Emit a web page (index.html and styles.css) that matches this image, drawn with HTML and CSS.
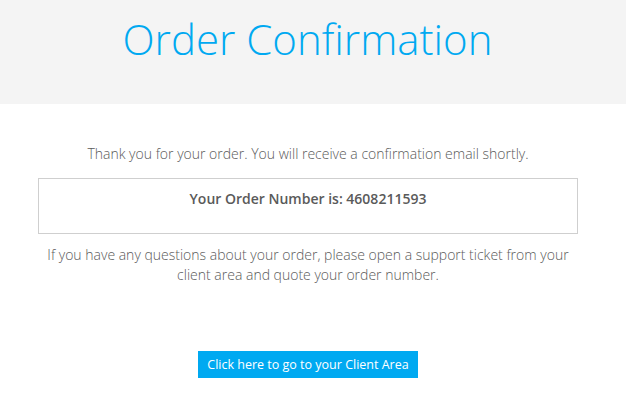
FILE: index.html
```html
<!DOCTYPE html>
<html>
<head>
<meta charset="utf-8">
<link rel="stylesheet" href="styles.css">
</head>
<body>
<header class="hero">
  <div class="hero-inner">
    <h1 class="title">Order Confirmation</h1>
  </div>
</header>
<main class="content">
  <p class="lead">Thank you for your order. You will receive a confirmation email shortly.</p>
  <div class="order-box">Your Order Number is: 4608211593</div>
  <p class="note">If you have any questions about your order, please open a support ticket from your client area and quote your order number.</p>
  <div class="actions">
    <a class="btn" href="#">Click here to go to your Client Area</a>
  </div>
</main>
</body>
</html>
```
FILE: styles.css
```css
html, body {
  margin: 0;
  padding: 0;
  background: #fff;
}
body {
  font-family: "Open Sans", "Liberation Sans", sans-serif;
  color: #5a5a5a;
}
.hero {
  background: #f4f4f4;
  height: 104px;
}
.hero-inner {
  width: 615px;
  display: flex;
  justify-content: center;
}
.title {
  margin: 9px 0 0;
  font-size: 42px;
  font-weight: 300;
  color: #00a9f1;
  line-height: 60px;
}
.content {
  width: 540px;
  margin-left: 38px;
  display: flex;
  flex-direction: column;
  align-items: center;
  text-align: center;
}
.lead {
  margin: 40px 0 0;
  font-size: 14px;
  font-weight: 300;
  line-height: 20px;
}
.order-box {
  box-sizing: border-box;
  width: 540px;
  height: 56px;
  margin-top: 14px;
  border: 1px solid #cfcfcf;
  padding-top: 10px;
  font-size: 14px;
  font-weight: 600;
  line-height: 20px;
}
.note {
  margin: 11px 0 0;
  font-size: 14px;
  font-weight: 300;
  line-height: 20px;
}
.actions {
  margin-top: 66px;
}
.btn {
  display: inline-block;
  background: #00a9f1;
  color: #fff;
  text-decoration: none;
  font-size: 12.5px;
  line-height: 27px;
  padding: 0 9px;
}
```
